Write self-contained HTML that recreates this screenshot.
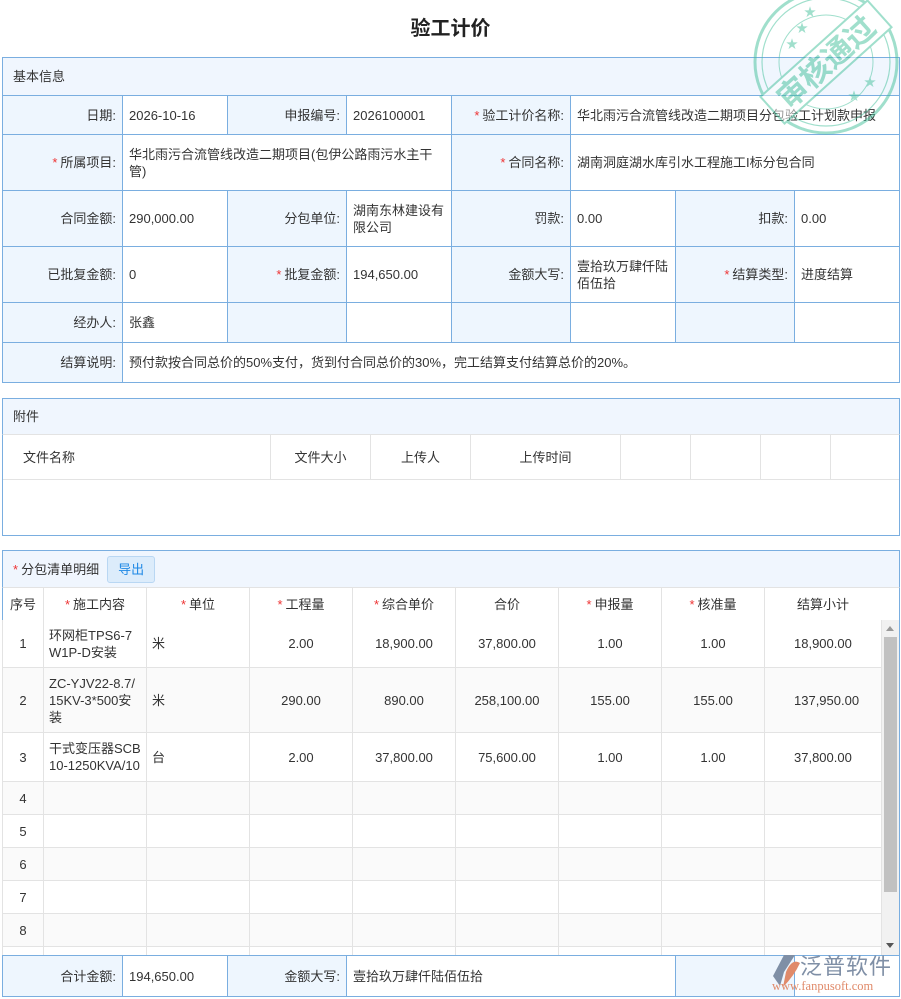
<!DOCTYPE html>
<html><head><meta charset="utf-8">
<style>
*{box-sizing:border-box;margin:0;padding:0}
body{width:901px;height:999px;background:#fff;position:relative;overflow:hidden;font-family:"Liberation Sans","Noto Sans CJK SC",sans-serif;font-size:13px;color:#333}
.c{position:absolute;border:1px solid #7aaee0;display:flex;align-items:center;line-height:17px}
.l{background:#eef6fe;justify-content:flex-end;padding-right:6px;text-align:right}
.v{background:#fff;padding-left:6px;padding-right:4px}
.h{background:#f0f6fe;padding-left:10px}
.r{color:#e33;margin-right:3px}
.g{position:absolute;border:1px solid #e3e3e3;display:flex;align-items:center;justify-content:center;line-height:17px;text-align:center}
.gl{justify-content:flex-start;padding-left:5px;text-align:left}
</style></head><body>
<div style="position:absolute;left:0;top:12px;width:901px;text-align:center;font-size:20px;font-weight:bold;color:#222">验工计价</div>

<div class="c h" style="left:2px;top:57px;width:898px;height:39px">基本信息</div>
<div class="c l" style="left:2px;top:95px;width:121px;height:40px">日期:</div>
<div class="c v" style="left:122px;top:95px;width:106px;height:40px">2026-10-16</div>
<div class="c l" style="left:227px;top:95px;width:120px;height:40px">申报编号:</div>
<div class="c v" style="left:346px;top:95px;width:106px;height:40px">2026100001</div>
<div class="c l" style="left:451px;top:95px;width:120px;height:40px"><span class="r">*</span>验工计价名称:</div>
<div class="c v" style="left:570px;top:95px;width:330px;height:40px">华北雨污合流管线改造二期项目分包验工计划款申报</div>

<div class="c l" style="left:2px;top:134px;width:121px;height:57px"><span class="r">*</span>所属项目:</div>
<div class="c v" style="left:122px;top:134px;width:330px;height:57px">华北雨污合流管线改造二期项目(包伊公路雨污水主干管)</div>
<div class="c l" style="left:451px;top:134px;width:120px;height:57px"><span class="r">*</span>合同名称:</div>
<div class="c v" style="left:570px;top:134px;width:330px;height:57px">湖南洞庭湖水库引水工程施工I标分包合同</div>

<div class="c l" style="left:2px;top:190px;width:121px;height:57px">合同金额:</div>
<div class="c v" style="left:122px;top:190px;width:106px;height:57px">290,000.00</div>
<div class="c l" style="left:227px;top:190px;width:120px;height:57px">分包单位:</div>
<div class="c v" style="left:346px;top:190px;width:106px;height:57px">湖南东林建设有限公司</div>
<div class="c l" style="left:451px;top:190px;width:120px;height:57px">罚款:</div>
<div class="c v" style="left:570px;top:190px;width:106px;height:57px">0.00</div>
<div class="c l" style="left:675px;top:190px;width:120px;height:57px">扣款:</div>
<div class="c v" style="left:794px;top:190px;width:106px;height:57px">0.00</div>

<div class="c l" style="left:2px;top:246px;width:121px;height:57px">已批复金额:</div>
<div class="c v" style="left:122px;top:246px;width:106px;height:57px">0</div>
<div class="c l" style="left:227px;top:246px;width:120px;height:57px"><span class="r">*</span>批复金额:</div>
<div class="c v" style="left:346px;top:246px;width:106px;height:57px">194,650.00</div>
<div class="c l" style="left:451px;top:246px;width:120px;height:57px">金额大写:</div>
<div class="c v" style="left:570px;top:246px;width:106px;height:57px">壹拾玖万肆仟陆佰伍拾</div>
<div class="c l" style="left:675px;top:246px;width:120px;height:57px"><span class="r">*</span>结算类型:</div>
<div class="c v" style="left:794px;top:246px;width:106px;height:57px">进度结算</div>

<div class="c l" style="left:2px;top:302px;width:121px;height:41px">经办人:</div>
<div class="c v" style="left:122px;top:302px;width:106px;height:41px">张鑫</div>
<div class="c l" style="left:227px;top:302px;width:120px;height:41px"></div>
<div class="c v" style="left:346px;top:302px;width:106px;height:41px"></div>
<div class="c l" style="left:451px;top:302px;width:120px;height:41px"></div>
<div class="c v" style="left:570px;top:302px;width:106px;height:41px"></div>
<div class="c l" style="left:675px;top:302px;width:120px;height:41px"></div>
<div class="c v" style="left:794px;top:302px;width:106px;height:41px"></div>

<div class="c l" style="left:2px;top:342px;width:121px;height:41px">结算说明:</div>
<div class="c v" style="left:122px;top:342px;width:778px;height:41px">预付款按合同总价的50%支付，货到付合同总价的30%，完工结算支付结算总价的20%。</div>

<div class="c" style="left:2px;top:398px;width:898px;height:138px;border-color:#7aaee0"></div>
<div class="c h" style="left:2px;top:398px;width:898px;height:37px;border-bottom-color:#e3e3e3">附件</div>
<div class="g gl" style="left:3px;top:434px;width:268px;height:46px;border-left:none;padding-left:20px">文件名称</div>
<div class="g" style="left:270px;top:434px;width:101px;height:46px">文件大小</div>
<div class="g" style="left:370px;top:434px;width:101px;height:46px">上传人</div>
<div class="g" style="left:470px;top:434px;width:151px;height:46px">上传时间</div>
<div class="g" style="left:620px;top:434px;width:71px;height:46px"></div>
<div class="g" style="left:690px;top:434px;width:71px;height:46px"></div>
<div class="g" style="left:760px;top:434px;width:71px;height:46px"></div>
<div class="g" style="left:830px;top:434px;width:69px;height:46px;border-right:none"></div>

<div class="c" style="left:2px;top:550px;width:898px;height:447px"></div>
<div class="c h" style="left:2px;top:550px;width:898px;height:38px;border-bottom-color:#e3e3e3"><span class="r">*</span>分包清单明细
<span style="margin-left:8px;display:inline-block;border:1px solid #b9d7f3;background:#dcecfb;color:#1e88e5;border-radius:3px;padding:4px 10px">导出</span></div>
<div style="position:absolute;left:3px;top:587px;width:896px;height:34px;overflow:hidden">
<div style="position:absolute;left:-1px;top:0;width:900px">
<div class="g" style="left:0;top:0;width:42px;height:34px">序号</div>
<div class="g" style="left:41px;top:0;width:104px;height:34px"><span class="r">*</span>施工内容</div>
<div class="g" style="left:144px;top:0;width:104px;height:34px"><span class="r">*</span>单位</div>
<div class="g" style="left:247px;top:0;width:104px;height:34px"><span class="r">*</span>工程量</div>
<div class="g" style="left:350px;top:0;width:104px;height:34px"><span class="r">*</span>综合单价</div>
<div class="g" style="left:453px;top:0;width:104px;height:34px">合价</div>
<div class="g" style="left:556px;top:0;width:104px;height:34px"><span class="r">*</span>申报量</div>
<div class="g" style="left:659px;top:0;width:104px;height:34px"><span class="r">*</span>核准量</div>
<div class="g" style="left:762px;top:0;width:138px;height:34px;justify-content:flex-start;padding-left:32px">结算小计</div>
</div>
</div>
<div id="rows"></div>
<div style="position:absolute;left:882px;top:620px;width:17px;height:335px;background:#f1f1f1"></div>
<div style="position:absolute;left:884px;top:637px;width:13px;height:255px;background:#c1c1c1"></div>
<div style="position:absolute;left:886px;top:626px;width:0;height:0;border-left:4px solid transparent;border-right:4px solid transparent;border-bottom:5px solid #999"></div>
<div style="position:absolute;left:886px;top:943px;width:0;height:0;border-left:4px solid transparent;border-right:4px solid transparent;border-top:5px solid #555"></div>

<div class="c l" style="left:2px;top:955px;width:121px;height:42px">合计金额:</div>
<div class="c v" style="left:122px;top:955px;width:106px;height:42px">194,650.00</div>
<div class="c l" style="left:227px;top:955px;width:120px;height:42px">金额大写:</div>
<div class="c v" style="left:346px;top:955px;width:330px;height:42px">壹拾玖万肆仟陆佰伍拾</div>
<div class="c l" style="left:675px;top:955px;width:120px;height:42px"></div>
<div class="c v" style="left:794px;top:955px;width:106px;height:42px"></div>

<svg style="position:absolute;left:768px;top:952px" width="130" height="44">
<path d="M16 3 L27 3 L16 20 L12 34 L5 24 Z" fill="#7f8fa6"/>
<path d="M18 20 Q24 6 32 11 Q26 24 15 35 Z" fill="#e08a6a"/>
<text x="32" y="22" font-family="Noto Sans CJK SC" font-size="22" fill="#7f8fa6" letter-spacing="1">泛普软件</text>
<text x="4" y="38" font-family="Liberation Serif" font-size="12.5" fill="#e08a6a">www.fanpusoft.com</text>
</svg>

<svg style="position:absolute;left:748px;top:-12px;opacity:.5" width="160" height="150">
<g transform="translate(78,74)" fill="none" stroke="#43c09a">
<circle r="71" stroke-width="3"/><circle r="64" stroke-width="1.2"/><circle r="47" stroke-width="1"/>
<g transform="rotate(-42)">
<rect x="-72" y="-18" width="144" height="36" fill="#fff" stroke-width="2"/>
<text x="0" y="11" text-anchor="middle" font-family="Noto Sans CJK SC" font-size="30" font-weight="bold" fill="#43c09a" stroke="none">审核通过</text>
</g>
<text x="-30" y="-30" font-size="12" fill="#43c09a" stroke="none">★</text>
<text x="-40" y="-14" font-size="12" fill="#43c09a" stroke="none">★</text>
<text x="-22" y="-46" font-size="12" fill="#43c09a" stroke="none">★</text>
<text x="22" y="38" font-size="12" fill="#43c09a" stroke="none">★</text>
<text x="38" y="24" font-size="12" fill="#43c09a" stroke="none">★</text>
</g></svg>

<script>
var cols=[3,44,147,250,353,456,559,662,765,882];
var rows=[[620,668,"1","环网柜TPS6-7<br>W1P-D安装","米","2.00","18,900.00","37,800.00","1.00","1.00","18,900.00"],
[668,733,"2","ZC-YJV22-8.7/<br>15KV-3*500安<br>装","米","290.00","890.00","258,100.00","155.00","155.00","137,950.00"],
[733,782,"3","干式变压器SCB<br>10-1250KVA/10","台","2.00","37,800.00","75,600.00","1.00","1.00","37,800.00"],
[782,815,"4"],[815,848,"5"],[848,881,"6"],[881,914,"7"],[914,947,"8"],[947,956,""]];
var h="";
rows.forEach(function(r,i){
 var bg=i%2?"#fafafa":"#fff";
 for(var c=0;c<9;c++){
  var t=r[c+2]||"";var cls="g"+((c==1||c==2)?" gl":"");
  var extra=c==1?"white-space:nowrap;":"";
  if(c==8) extra+="justify-content:flex-start;padding-left:29px;";
  h+='<div class="'+cls+'" style="'+extra+'background:'+bg+';border-top:none;left:'+(cols[c]-1)+'px;top:'+r[0]+'px;width:'+(cols[c+1]-cols[c]+1)+'px;height:'+(Math.min(r[1],956)-r[0])+'px;overflow:hidden">'+t+'</div>';
 }
});
document.getElementById("rows").innerHTML=h;
</script>
</body></html>
